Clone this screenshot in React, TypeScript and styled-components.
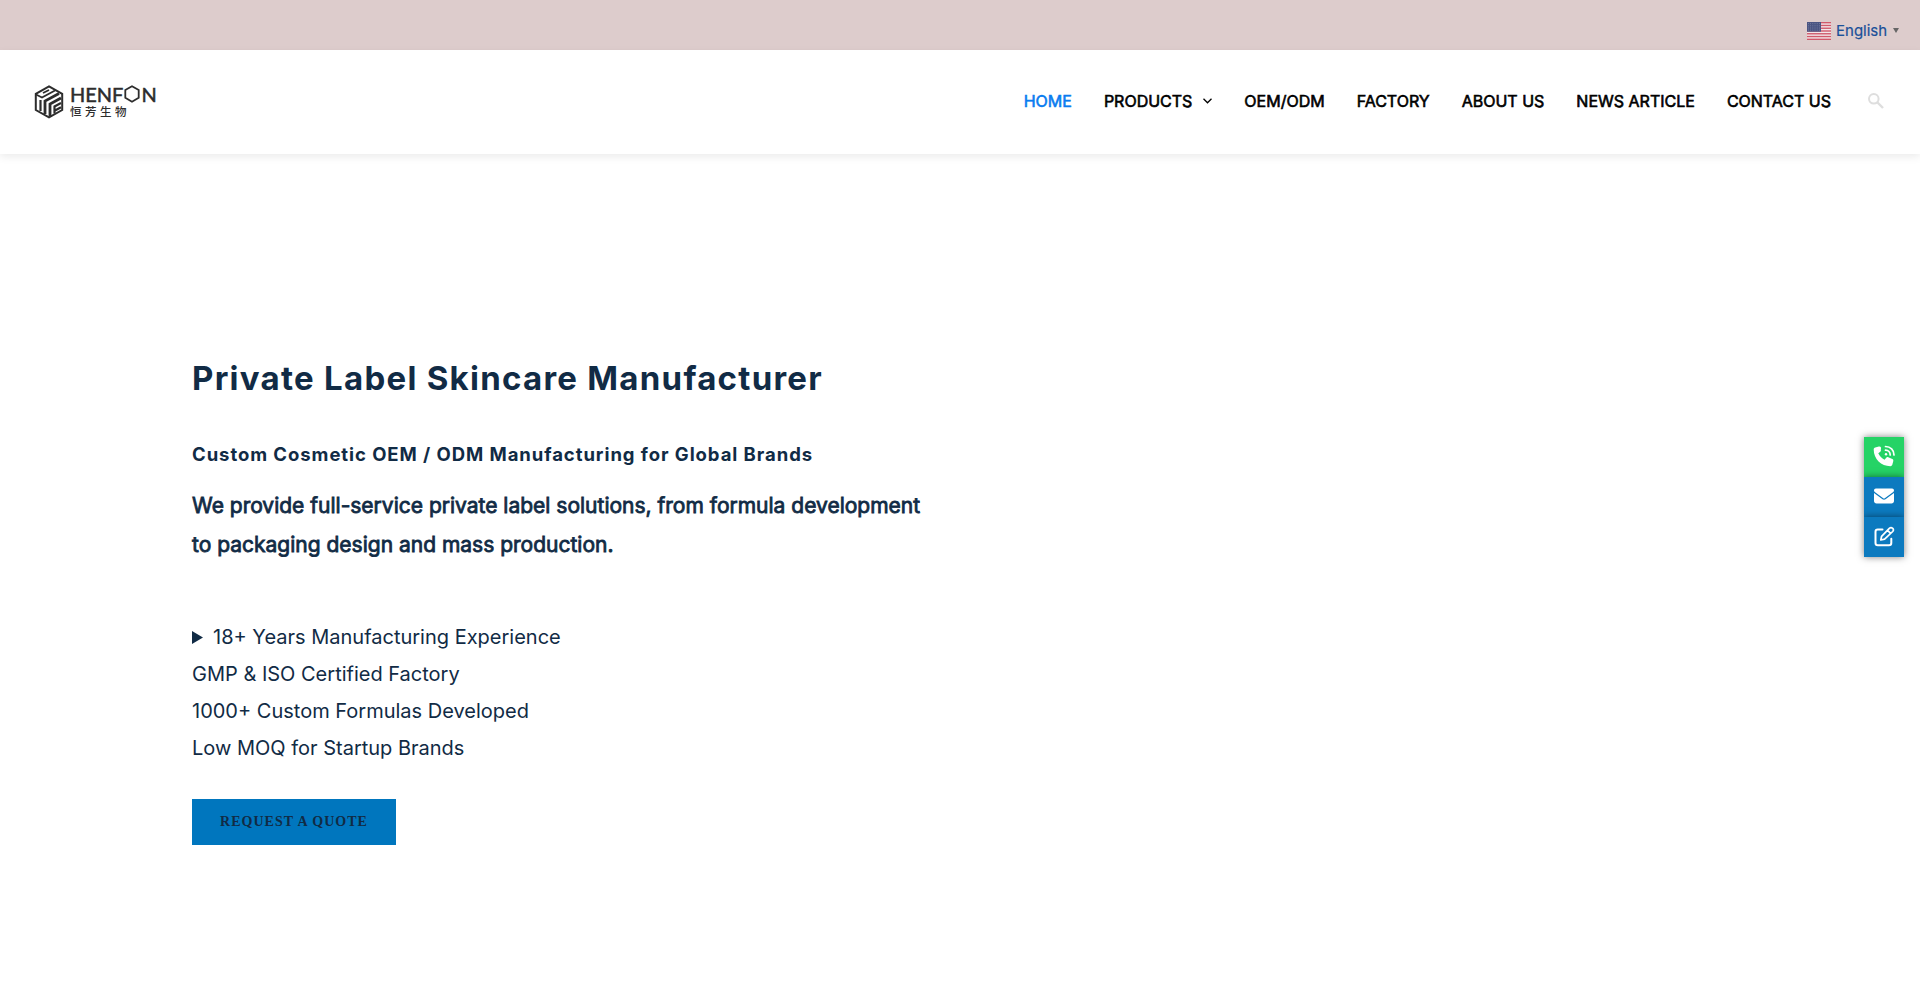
import React from "react";
import styled, { createGlobalStyle } from "styled-components";
import { FaEnvelope } from "react-icons/fa6";

const Global = createGlobalStyle`
  * { box-sizing: border-box; }
  body { margin: 0; background: #fff; font-family: Inter, sans-serif; color: #112b45; overflow: hidden; }
  h1, h2, p, ul { margin: 0; padding: 0; }
`;

const Page = styled.div`
  height: 993px;
  display: flex;
  flex-direction: column;
`;

const TopBar = styled.div`
  height: 50px;
  flex: none;
  background: #ddcccc;
  display: flex;
  justify-content: flex-end;
  padding: 11px 20px 0 0;
`;

const Language = styled.a`
  display: flex;
  align-items: center;
  height: 39px;
  font-size: 15px;
  color: #1a5099;
  -webkit-text-stroke: 0.2px #1a5099;
`;

const LanguageName = styled.span`
  margin: 0 0 0 5px;
  width: 51px;
  white-space: nowrap;
`;

const Arrow = styled.span`
  width: 0;
  margin: 0 1px 1px 6px;
  border: 3px solid transparent;
  border-top: 5px solid #666;
  border-bottom: 0;
`;

const Header = styled.header`
  height: 104px;
  flex: none;
  display: flex;
  align-items: center;
  justify-content: space-between;
  padding: 0 36px 2px 34px;
  background: #fff;
  box-shadow: 0 3px 8px rgba(0, 0, 0, 0.08);
`;

const Logo = styled.a`
  display: flex;
  align-items: center;
  gap: 6px;
  color: #2d2d2d;
  height: 34px;
  margin-top: 1px;
`;

const LogoText = styled.div`
  display: flex;
  flex-direction: column;
`;

const Wordmark = styled.div`
  display: flex;
  align-items: center;
  height: 17px;
  font: 400 20px/17px Lato, sans-serif;
  -webkit-text-stroke: 0.5px #2d2d2d;
`;

const WordmarkCn = styled.div`
  font: 500 11.5px/14px "Noto Sans CJK SC", sans-serif;
  letter-spacing: 3.5px;
  margin-top: 1px;
`;

const Nav = styled.nav`
  display: flex;
  align-items: center;
  gap: 32px;
`;

const NavLink = styled.a<{ $active?: boolean }>`
  display: flex;
  align-items: center;
  gap: 11px;
  font-size: 16px;
  line-height: 24px;
  white-space: nowrap;
  color: ${(p) => (p.$active ? "#0a7cf0" : "#000")};
  -webkit-text-stroke: 0.6px ${(p) => (p.$active ? "#0a7cf0" : "#000")};
`;

const SearchButton = styled.span`
  display: flex;
  margin-left: 5px;
`;

const Hero = styled.main`
  padding: 200px 0 0 192px;
  width: 960px;
  display: flex;
  flex-direction: column;
  align-items: flex-start;
`;

const Title = styled.h1`
  font-size: 33px;
  font-weight: 700;
  line-height: 48px;
  letter-spacing: 1.27px;
  white-space: nowrap;
`;

const Subtitle = styled.h2`
  margin-top: 38px;
  font-size: 18.5px;
  font-weight: 700;
  line-height: 28px;
  letter-spacing: 0.94px;
  white-space: nowrap;
`;

const Lead = styled.p`
  margin-top: 18px;
  font-size: 21px;
  line-height: 39px;
  white-space: nowrap;
  -webkit-text-stroke: 0.8px #112b45;
`;

const Points = styled.ul`
  margin-top: 55px;
  list-style: none;
  font-size: 20px;
  line-height: 37px;
`;

const Point = styled.li`
  display: flex;
  align-items: center;
  white-space: nowrap;
`;

const Marker = styled.svg`
  margin-right: 10px;
`;

const Quote = styled.a`
  margin-top: 32px;
  width: 204px;
  height: 46px;
  display: flex;
  align-items: center;
  justify-content: center;
  background: #0076be;
  font: 700 14px/20px "Liberation Serif", serif;
  letter-spacing: 1px;
  white-space: nowrap;
`;

const Dock = styled.aside`
  position: fixed;
  right: 16px;
  top: 437px;
  display: flex;
  flex-direction: column;
`;

const DockButton = styled.a<{ $color: string }>`
  width: 40px;
  height: 40px;
  display: flex;
  align-items: center;
  justify-content: center;
  padding-bottom: 2px;
  color: #fff;
  background: ${(p) => p.$color};
  box-shadow: 0 0 7px rgba(0, 0, 0, 0.5);
`;

const Flag = () => (
  <svg width="24" height="18" viewBox="0 0 24 18">
    <rect width="24" height="18" fill="#f2e6e8" />
    {[0, 1, 2, 3, 4, 5, 6].map((i) => (
      <rect key={i} y={i * 2.77} width="24" height="1.38" fill="#d0596b" />
    ))}
    <rect width="14" height="9.7" fill="#4b5583" />
    {[1.6, 3.8, 6, 8.1].map((y) => (
      <path key={y} d={`M1 ${y}H13.5`} stroke="#9299b5" strokeWidth="0.7" strokeDasharray="0.8 1.4" />
    ))}
  </svg>
);

const LogoMark = () => (
  <svg width="30" height="34" viewBox="0 0 30 34" fill="none" stroke="#2d2d2d">
    <path d="M15 1.3 28.2 8.8V25L15 32.4 1.8 25V8.8Z" strokeWidth="2" />
    <path d="M2 9.5 8 12.5 21 5.5M9 8 15 5" strokeWidth="1.9" />
    <path d="M6.5 26V15" strokeWidth="2.2" />
    <path d="M11 29V16L25 8.5" strokeWidth="2.8" />
    <path d="M16 31V19L27 13" strokeWidth="2.8" />
    <path d="M20.5 28.5V21.5L27 18M21 25.5 27 22.3" strokeWidth="2.2" />
  </svg>
);

const LogoHexagon = () => (
  <svg width="18" height="18" viewBox="0 0 17 18" fill="none" stroke="#2d2d2d" strokeWidth="1.8">
    <path d="M8.5 1.2 15.2 5V12.8L8.5 16.7 1.8 12.8V5Z" />
  </svg>
);

const PhoneIcon = () => (
  <svg width="22" height="22" viewBox="0 0 22 22" fill="none">
    <path
      fill="#fff"
      d="M5.9 1.6 2.2 2.6C1.3 2.9.7 3.6.7 4.5.7 14 8.2 21.2 17.4 21.2c.9 0 1.6-.6 1.9-1.4l1-3.8c.2-.9-.2-1.7-1-2.1l-4.1-1.7c-.7-.3-1.5-.1-2 .5l-1.6 2c-2.9-1.4-5-3.5-6.3-6.4l2-1.6c.6-.5.8-1.3.5-2L8.1 2.7c-.4-.9-1.3-1.3-2.2-1.1Z"
    />
    <path d="M12.5 1.5C17.5 1.5 21 5.2 21 10M12.5 5.2c2.9 0 4.7 2.1 4.7 4.8" stroke="#fff" strokeWidth="1.7" strokeLinecap="round" />
    <circle cx="13" cy="9.2" r="1.2" fill="#fff" />
  </svg>
);

const EditIcon = () => (
  <svg width="21" height="21" viewBox="0 0 21 21" fill="none" stroke="#fff" strokeWidth="2" strokeLinejoin="round" strokeLinecap="round">
    <path d="M8.5 3.5H3.8Q1.5 3.5 1.5 5.8V17Q1.5 19.3 3.8 19.3H15Q17.3 19.3 17.3 17V12.8" />
    <path d="M6.8 14 7.6 10.3 15.3 2.3Q17 .8 18.7 2.3 20.1 4 18.7 5.5L10.6 13.2ZM13.6 4.3 16.6 7.3" strokeWidth="1.7" />
  </svg>
);

const SearchIcon = () => (
  <svg width="16" height="16" viewBox="0 0 16 16" fill="none" stroke="#dedede" strokeWidth="2">
    <circle cx="5.8" cy="5.8" r="4.8" />
    <path d="m9.5 9.5 5.5 5.5" strokeWidth="2.4" />
  </svg>
);

const Chevron = () => (
  <svg width="9" height="6" viewBox="0 0 9 6" fill="none" stroke="#000" strokeWidth="1.3">
    <path d="m.5.8 4 4 4-4" />
  </svg>
);

const links = ["HOME", "PRODUCTS", "OEM/ODM", "FACTORY", "ABOUT US", "NEWS ARTICLE", "CONTACT US"];
const points = [
  "18+ Years Manufacturing Experience",
  "GMP & ISO Certified Factory",
  "1000+ Custom Formulas Developed",
  "Low MOQ for Startup Brands",
];

export default function App() {
  return (
    <Page>
      <Global />
      <TopBar>
        <Language>
          <Flag />
          <LanguageName>English</LanguageName>
          <Arrow />
        </Language>
      </TopBar>
      <Header>
        <Logo>
          <LogoMark />
          <LogoText>
            <Wordmark>
              HENF
              <LogoHexagon />N
            </Wordmark>
            <WordmarkCn>恒芳生物</WordmarkCn>
          </LogoText>
        </Logo>
        <Nav>
          {links.map((label, i) => (
            <NavLink key={label} $active={i === 0}>
              {label}
              {label === "PRODUCTS" && <Chevron />}
            </NavLink>
          ))}
          <SearchButton>
            <SearchIcon />
          </SearchButton>
        </Nav>
      </Header>
      <Hero>
        <Title>Private Label Skincare Manufacturer</Title>
        <Subtitle>Custom Cosmetic OEM / ODM Manufacturing for Global Brands</Subtitle>
        <Lead>
          We provide full-service private label solutions, from formula development
          <br />
          to packaging design and mass production.
        </Lead>
        <Points>
          {points.map((text, i) => (
            <Point key={text}>
              {i === 0 && (
                <Marker width="11" height="13" viewBox="0 0 11 13">
                  <path d="M0 0 11 6.5 0 13Z" fill="#112b45" />
                </Marker>
              )}
              {text}
            </Point>
          ))}
        </Points>
        <Quote>REQUEST A QUOTE</Quote>
      </Hero>
      <Dock>
        <DockButton $color="#25d366">
          <PhoneIcon />
        </DockButton>
        <DockButton $color="#0c7abf">
          <FaEnvelope size={20} />
        </DockButton>
        <DockButton $color="#0c7abf">
          <EditIcon />
        </DockButton>
      </Dock>
    </Page>
  );
}
